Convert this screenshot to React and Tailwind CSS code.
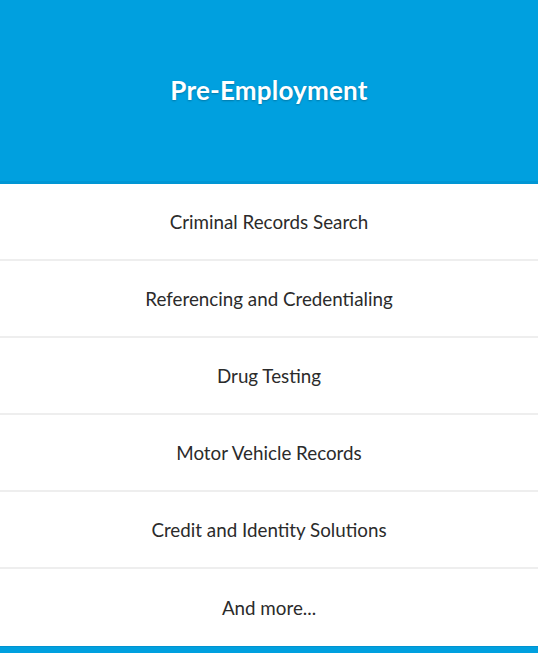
const items = [
  'Criminal Records Search',
  'Referencing and Credentialing',
  'Drug Testing',
  'Motor Vehicle Records',
  'Credit and Identity Solutions',
  'And more...',
]

export default function App() {
  return (
    <div className="w-[538px] h-[653px] bg-white overflow-hidden" style={{ fontFamily: 'Lato, "Open Sans", sans-serif' }}>
      {/* Header */}
      <div className="h-[184px] bg-[#00a0df] border-b-[3px] border-[#0096d4] flex items-center justify-center">
        <h1 className="text-white text-[26px] font-bold tracking-[0.2px] [text-shadow:0_1px_2px_rgba(0,0,0,0.25)] -mt-[1px]">
          Pre-Employment
        </h1>
      </div>

      {/* List */}
      <ul>
        {items.map((item, i) => (
          <li
            key={item}
            className={`h-[77px] flex items-center justify-center pt-[2px] text-[18.8px] text-[#2b2b2b] ${i < items.length - 1 ? 'border-b-2 border-[#eeeeee]' : ''}`}
          >
            {item}
          </li>
        ))}
      </ul>
      <div className="h-[7px] bg-[#00a0df] border-t border-[#0093d0]" />
    </div>
  )
}
